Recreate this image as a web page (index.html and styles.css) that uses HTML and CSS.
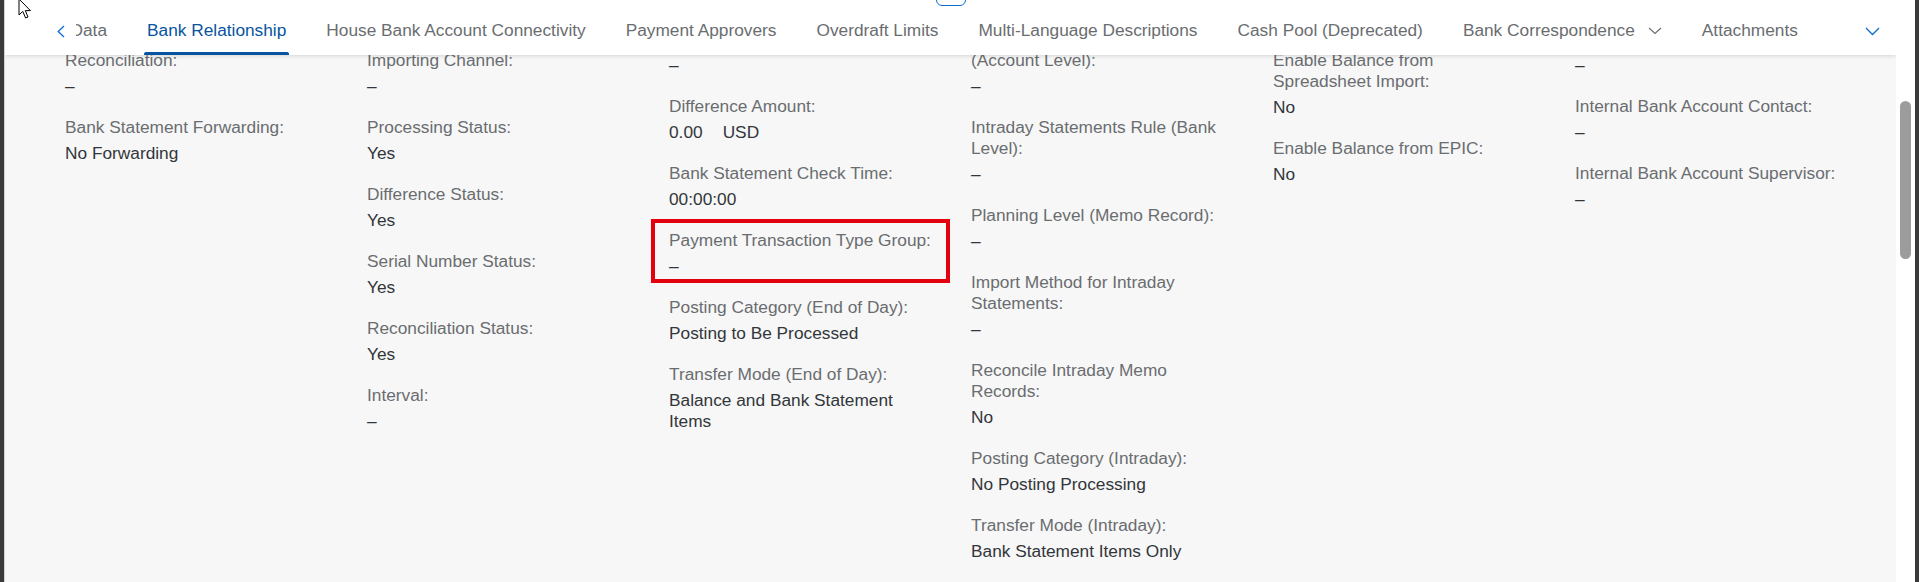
FILE: index.html
```html
<!DOCTYPE html>
<html lang="en">
<head>
<meta charset="utf-8">
<title>Bank Relationship</title>
<link rel="stylesheet" href="styles.css">
</head>
<body>
<div class="window">
  <div class="main">
    <div class="collapse-btn"></div>
    <header class="tabbar">
      <div class="tab-nav tab-nav--left">
        <svg width="8" height="13" viewBox="0 0 8 13"><polyline points="7,1 1.2,6.5 7,12" fill="none" stroke="#0a6ed1" stroke-width="1.3"/></svg>
      </div>
      <div class="tab-scroller">
        <div class="tab-list">
          <div class="tab"><span class="tab-text">Data</span></div>
          <div class="tab tab--active"><span class="tab-text">Bank Relationship</span></div>
          <div class="tab"><span class="tab-text">House Bank Account Connectivity</span></div>
          <div class="tab"><span class="tab-text">Payment Approvers</span></div>
          <div class="tab"><span class="tab-text">Overdraft Limits</span></div>
          <div class="tab"><span class="tab-text">Multi-Language Descriptions</span></div>
          <div class="tab"><span class="tab-text">Cash Pool (Deprecated)</span></div>
          <div class="tab"><span class="tab-text">Bank Correspondence<svg class="tab-caret" width="14" height="8" viewBox="0 0 14 8"><polyline points="1,1 7,6.5 13,1" fill="none" stroke="#6a6d70" stroke-width="1.1"/></svg></span></div>
          <div class="tab"><span class="tab-text">Attachments</span></div>
        </div>
      </div>
      <div class="tab-nav tab-nav--right">
        <svg width="15" height="9" viewBox="0 0 15 9"><polyline points="1,1 7.5,7.5 14,1" fill="none" stroke="#0a6ed1" stroke-width="1.3"/></svg>
      </div>
    </header>

    <section class="content">
      <div class="column">
        <div class="field"><div class="label">Reconciliation:</div><div class="value">–</div></div>
        <div class="field"><div class="label">Bank Statement Forwarding:</div><div class="value">No Forwarding</div></div>
      </div>

      <div class="column">
        <div class="field"><div class="label">Importing Channel:</div><div class="value">–</div></div>
        <div class="field"><div class="label">Processing Status:</div><div class="value">Yes</div></div>
        <div class="field"><div class="label">Difference Status:</div><div class="value">Yes</div></div>
        <div class="field"><div class="label">Serial Number Status:</div><div class="value">Yes</div></div>
        <div class="field"><div class="label">Reconciliation Status:</div><div class="value">Yes</div></div>
        <div class="field"><div class="label">Interval:</div><div class="value">–</div></div>
      </div>

      <div class="column">
        <div class="field"><div class="value">–</div></div>
        <div class="field"><div class="label">Difference Amount:</div><div class="value">0.00<span class="unit">USD</span></div></div>
        <div class="field"><div class="label">Bank Statement Check Time:</div><div class="value">00:00:00</div></div>
        <div class="field field--highlight"><div class="label">Payment Transaction Type Group:</div><div class="value">–</div></div>
        <div class="field"><div class="label">Posting Category (End of Day):</div><div class="value">Posting to Be Processed</div></div>
        <div class="field"><div class="label">Transfer Mode (End of Day):</div><div class="value">Balance and Bank Statement<br>Items</div></div>
      </div>

      <div class="column">
        <div class="field"><div class="label">(Account Level):</div><div class="value">–</div></div>
        <div class="field"><div class="label">Intraday Statements Rule (Bank<br>Level):</div><div class="value">–</div></div>
        <div class="field"><div class="label">Planning Level (Memo Record):</div><div class="value">–</div></div>
        <div class="field"><div class="label">Import Method for Intraday<br>Statements:</div><div class="value">–</div></div>
        <div class="field"><div class="label">Reconcile Intraday Memo<br>Records:</div><div class="value">No</div></div>
        <div class="field"><div class="label">Posting Category (Intraday):</div><div class="value">No Posting Processing</div></div>
        <div class="field"><div class="label">Transfer Mode (Intraday):</div><div class="value">Bank Statement Items Only</div></div>
      </div>

      <div class="column">
        <div class="field"><div class="label">Enable Balance from<br>Spreadsheet Import:</div><div class="value">No</div></div>
        <div class="field"><div class="label">Enable Balance from EPIC:</div><div class="value">No</div></div>
      </div>

      <div class="column">
        <div class="field"><div class="value">–</div></div>
        <div class="field"><div class="label">Internal Bank Account Contact:</div><div class="value">–</div></div>
        <div class="field"><div class="label">Internal Bank Account Supervisor:</div><div class="value">–</div></div>
      </div>
    </section>
  </div>
  <div class="scrollbar"><div class="scrollbar-thumb"></div></div>
</div>
<svg class="cursor" width="14" height="22" viewBox="0 0 14 22"><path d="M1,1 L1,17 L4.8,13.4 L7.6,20 L10,19 L7.3,12.6 L12.4,12.6 Z" fill="#fff" stroke="#000" stroke-width="1" stroke-linejoin="round"/></svg>
</body>
</html>
```

FILE: styles.css
```css
html, body {
  margin: 0;
  height: 100%;
}

body {
  background: #3a3a3a;
  font-family: "Liberation Sans", Arial, sans-serif;
  overflow: hidden;
  position: relative;
}

.window {
  display: flex;
  height: 582px;
  margin: 0 4px;
}

.main {
  flex: 1;
  position: relative;
  background: #f7f7f7;
  border-left: 1px solid #d2d2d2;
  overflow: hidden;
}

.scrollbar {
  width: 19px;
  background: #ffffff;
}

.scrollbar-thumb {
  width: 11px;
  height: 158px;
  margin: 101px 0 0 4px;
  background: #9c9c9c;
  border-radius: 6px;
}

/* Tab header */
.tabbar {
  position: absolute;
  top: 0;
  left: 0;
  right: 0;
  height: 55px;
  background: #ffffff;
  box-shadow: 0 1px 4px rgba(0, 0, 0, 0.14);
  display: flex;
  z-index: 2;
}

.tab-nav {
  display: flex;
  align-items: center;
  padding-top: 7px;
  flex: none;
}

.tab-nav--left {
  margin-left: 52px;
  margin-right: 11px;
}

.tab-nav--right {
  margin-left: 20px;
  margin-right: 16px;
}

.tab-scroller {
  flex: 1;
  min-width: 0;
  overflow: hidden;
}

.tab-list {
  display: flex;
  margin-left: -25.5px;
  height: 55px;
}

.tab {
  flex: none;
  padding: 6px 17px 0;
  font-size: 17.3px;
  line-height: 49px;
  color: #6a6d70;
  white-space: nowrap;
}

.tab-text {
  position: relative;
  display: block;
  padding: 0 3px;
  height: 49px;
}

.tab--active .tab-text {
  color: #0854a0;
}

.tab--active .tab-text::after {
  content: "";
  position: absolute;
  left: 0;
  right: 0;
  bottom: 0;
  height: 3px;
  background: #0854a0;
  border-radius: 2px 2px 0 0;
}

.tab-caret {
  margin-left: 13px;
  vertical-align: middle;
}

.collapse-btn {
  position: absolute;
  top: -20px;
  left: 50%;
  margin-left: -15px;
  width: 28px;
  height: 24px;
  border: 1px solid #0a6ed1;
  border-radius: 6px;
  background: #ffffff;
  z-index: 3;
}

/* Form content */
.content {
  display: grid;
  grid-template-columns: repeat(6, 302px);
  padding: 49.5px 0 0 60px;
}

.column {
  display: flex;
  flex-direction: column;
}

.field {
  position: relative;
  margin-bottom: 20px;
}

.label {
  font-size: 17.3px;
  line-height: 21px;
  color: #6a6d70;
  white-space: nowrap;
}

.value {
  margin-top: 5px;
  font-size: 17.3px;
  line-height: 21px;
  color: #32363a;
  white-space: nowrap;
}

.unit {
  margin-left: 20px;
}

.field--highlight::before {
  content: "";
  position: absolute;
  left: -18px;
  top: -11px;
  width: 299px;
  height: 64px;
  border: 4px solid #e3000f;
  box-sizing: border-box;
}

.cursor {
  position: absolute;
  left: 18px;
  top: -2px;
  z-index: 10;
}
```
